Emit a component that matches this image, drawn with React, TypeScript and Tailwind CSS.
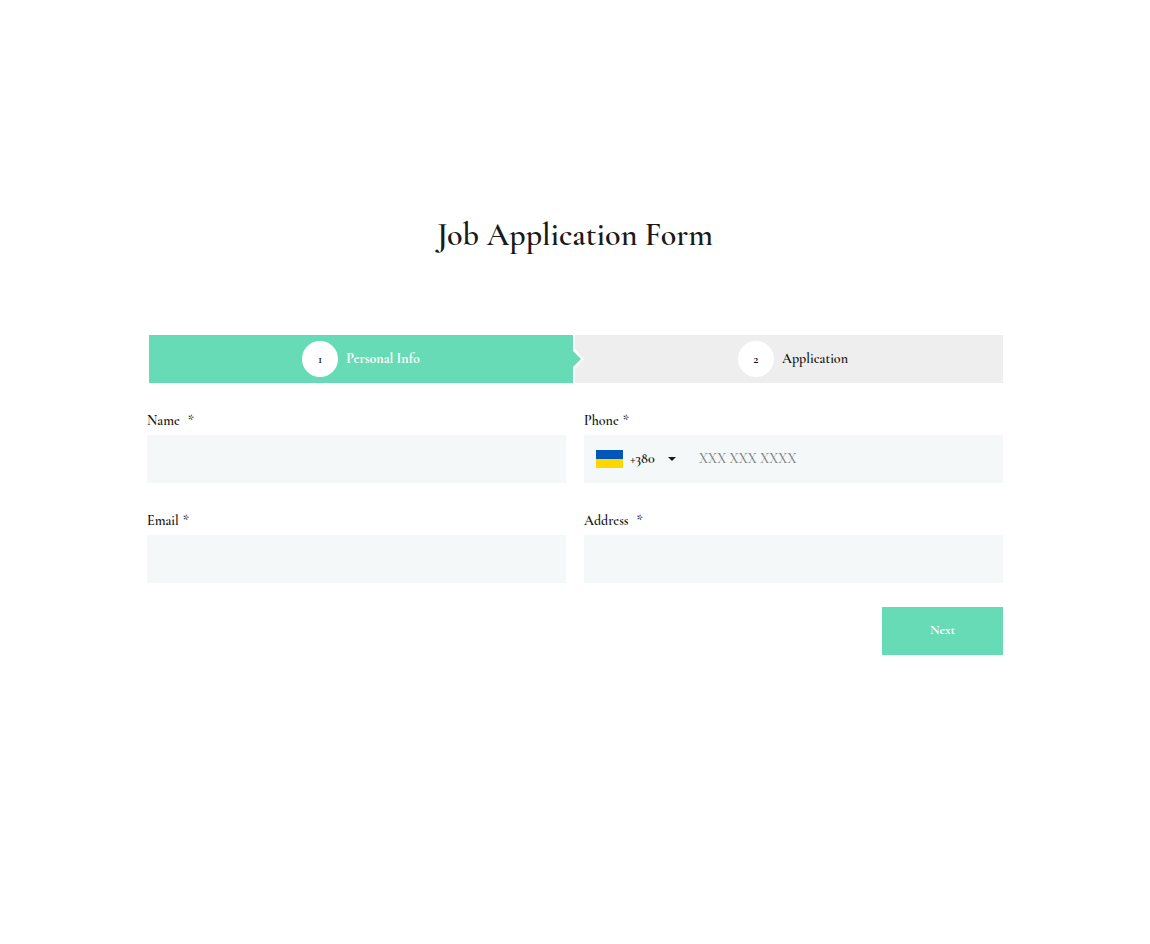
import { useState } from "react";
import type { ReactNode } from "react";

function Field({ id, label, wide, children }: { id: string; label: string; wide?: boolean; children: ReactNode }) {
  return (
    <div className="flex flex-col">
      <label htmlFor={id} className={wide ? "flex gap-2 leading-7" : "flex gap-1 leading-7"}>
        <span>{label}</span>
        <span className="font-medium">*</span>
      </label>
      {children}
    </div>
  );
}

function Flag() {
  return (
    <svg width="27" height="18" viewBox="0 0 27 18" aria-hidden="true" className="shrink-0">
      <rect width="27" height="9" fill="#0057b8" />
      <rect y="9" width="27" height="9" fill="#ffd700" />
    </svg>
  );
}

const inputClass = "h-12 w-full bg-[#f4f8f9] px-3 outline-none";

export default function App() {
  const [code, setCode] = useState("+380");
  return (
    <main className="min-h-screen bg-white px-6 pt-[211px] pb-12 font-['Cormorant_Garamond','Liberation_Serif',serif] text-sm font-semibold text-[#111111]">
      <div className="mx-auto max-w-[856px]">
        <h1 className="text-center text-[32px] leading-12 font-semibold text-[#1a1a1a]">Job Application Form</h1>

        <ol className="mt-[76px] grid grid-cols-[424fr_428fr] gap-[2px] pl-[2px]">
          <li className="relative flex h-12 items-center justify-center gap-2 bg-[#67dbb6]">
            <span className="flex size-9 items-center justify-center rounded-full bg-white text-[13px]">1</span>
            <span className="font-bold text-white">Personal Info</span>
            <svg
              width="11"
              height="24"
              viewBox="0 0 11 24"
              aria-hidden="true"
              className="absolute top-1/2 left-full -translate-y-1/2"
            >
              <path d="M0 0 L11 12 L0 24 Z" fill="#ffffff" />
              <path d="M0 4 L8 12 L0 20 Z" fill="#67dbb6" />
            </svg>
          </li>
          <li className="flex h-12 items-center justify-center gap-2 bg-[#eeeeee] pl-2">
            <span className="flex size-9 items-center justify-center rounded-full bg-white text-[13px]">2</span>
            <span>Application</span>
          </li>
        </ol>

        <form className="mt-6" onSubmit={(e) => e.preventDefault()}>
          <div className="grid grid-cols-2 gap-x-[18px] gap-y-6">
            <Field id="name" label="Name" wide>
              <input id="name" type="text" className={inputClass} />
            </Field>
            <Field id="phone" label="Phone">
              <div className="flex h-12 items-center bg-[#f4f8f9] px-3">
                <Flag />
                <div className="relative ml-[7px] flex items-center">
                  <select
                    aria-label="Country code"
                    value={code}
                    onChange={(e) => setCode(e.target.value)}
                    className="w-12 appearance-none bg-transparent outline-none"
                  >
                    <option value="+380">+380</option>
                  </select>
                  <svg
                    width="8"
                    height="4"
                    viewBox="0 0 8 4"
                    aria-hidden="true"
                    className="pointer-events-none absolute right-[2px]"
                  >
                    <path d="M0 0 H8 L4 4 Z" fill="#1a1a1a" />
                  </svg>
                </div>
                <input
                  id="phone"
                  type="tel"
                  placeholder="XXX XXX XXXX"
                  className="ml-[21px] h-full min-w-0 flex-1 bg-transparent pb-[2px] font-medium outline-none placeholder:text-[#808080]"
                />
              </div>
            </Field>
            <Field id="email" label="Email">
              <input id="email" type="email" className={inputClass} />
            </Field>
            <Field id="address" label="Address" wide>
              <input id="address" type="text" className={inputClass} />
            </Field>
          </div>
          <div className="mt-6 flex justify-end">
            <button type="submit" className="h-12 bg-[#67dbb6] px-12 pb-[2px] text-[13px] font-bold text-white">
              Next
            </button>
          </div>
        </form>
      </div>
    </main>
  );
}
